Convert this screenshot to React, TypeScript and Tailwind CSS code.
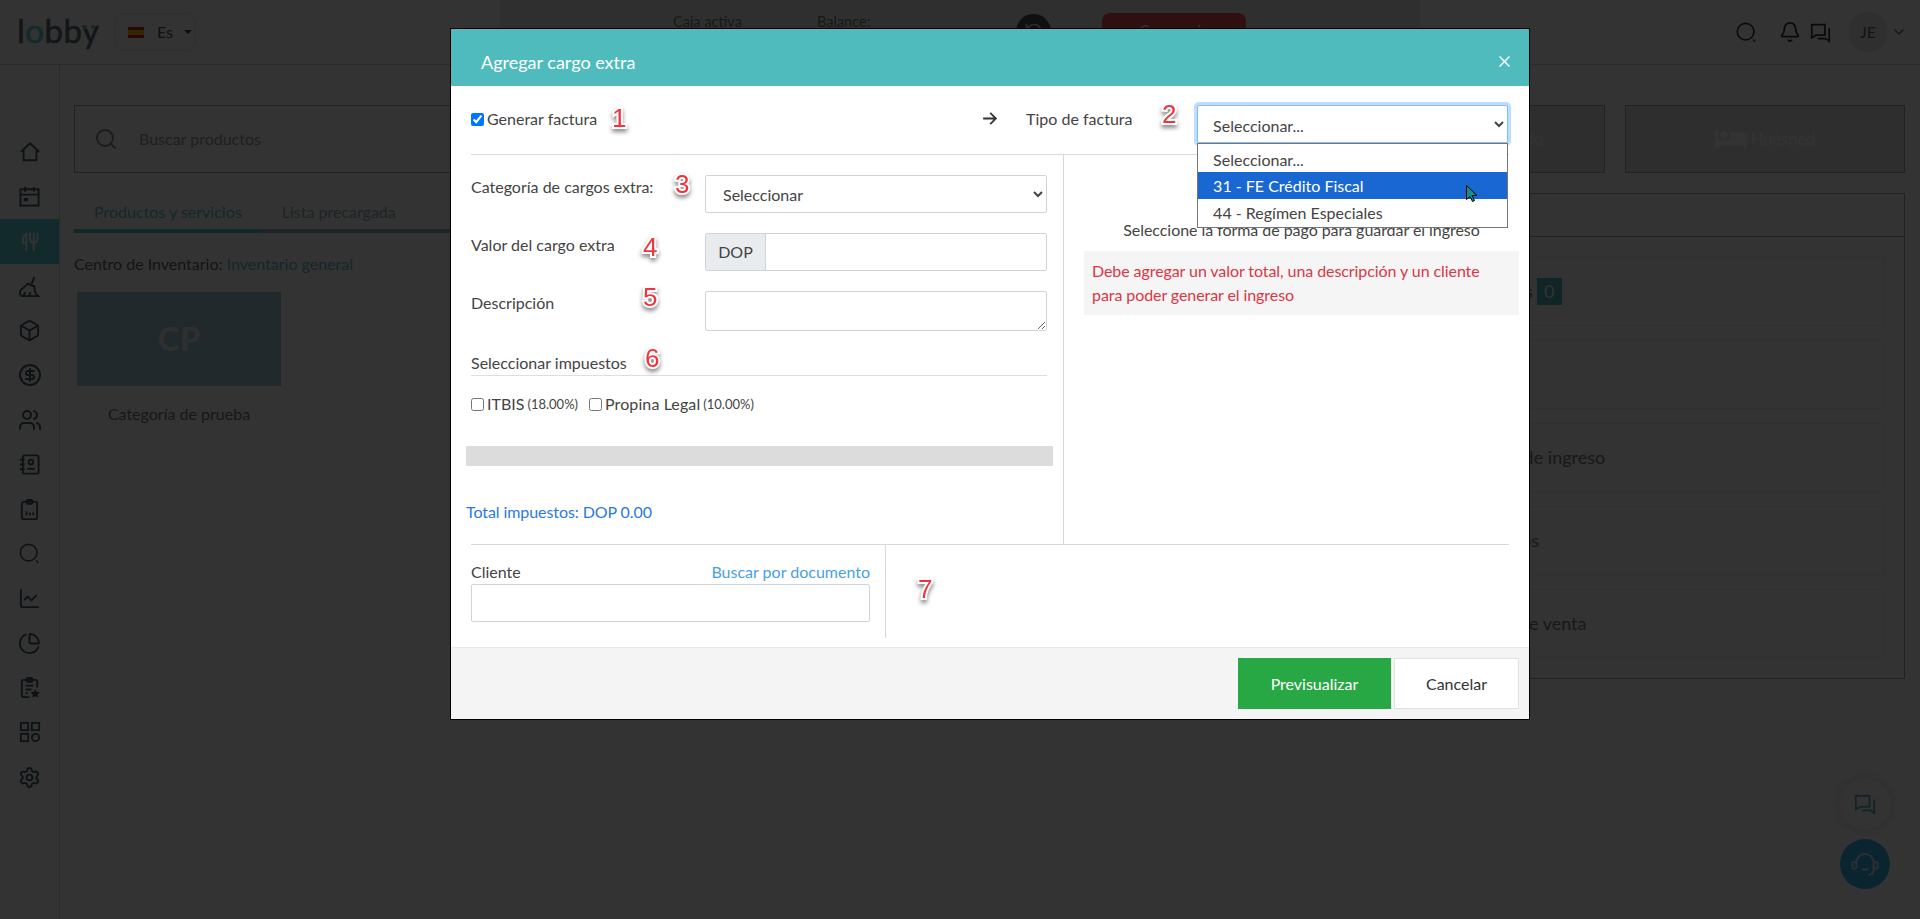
import React from "react";
import {
  Box,
  CircleDollarSign,
  Users,
  ChartLine,
  ChartPie,
  Settings,
  Bell,
  ChevronDown,
  Search,
  RotateCcw,
} from "lucide-react";
import { FaBed } from "react-icons/fa";

const svgProps = {
  viewBox: "0 0 24 24",
  fill: "none",
  stroke: "currentColor",
  strokeWidth: 2,
};

function HomeIcon() {
  return (
    <svg {...svgProps} className="h-[22px] w-[22px]">
      <path d="M2 12 12 2.5 22 12" />
      <path d="M5 10v11h14V10" />
    </svg>
  );
}

function CalendarIcon() {
  return (
    <svg {...svgProps} className="h-[23px] w-[23px]">
      <rect x="2.5" y="4.5" width="19" height="17" />
      <path d="M2.5 10h19M7.5 2v5M16.5 2v5" />
      <rect x="6" y="13.5" width="4.5" height="3.5" fill="currentColor" stroke="none" />
    </svg>
  );
}

function CutleryIcon() {
  return (
    <svg {...svgProps} className="h-[22px] w-[22px]">
      <path d="M8 2v20M8 3C5 4 4 9 4.500 13H8" />
      <path d="M16 2v20M12 2v7c0 3 2 4 4 4s4-1 4-4V2" />
    </svg>
  );
}

function BroomIcon() {
  return (
    <svg {...svgProps} className="h-[23px] w-[23px]">
      <path d="M17 2l-3 8" />
      <path d="M10 9l7 3c0 4 .5 7 4 10H5c-2 0-3-2-3-4 0-4 5-4 8-9z" />
      <path d="M6 22c0-2 1-3 2-4M12 22c0-2 .5-3 1-4" />
    </svg>
  );
}

function ContactBookIcon() {
  return (
    <svg {...svgProps} className="h-[23px] w-[23px]">
      <rect x="5" y="2.500" width="16.500" height="19" rx="2" />
      <path d="M2 7h5M2 12h5M2 17h5" />
      <circle cx="13.500" cy="9.500" r="2.500" />
      <path d="M9.500 16.500h8" />
    </svg>
  );
}

function ClipboardBarsIcon() {
  return (
    <svg {...svgProps} className="h-[23px] w-[23px]">
      <rect x="4" y="4" width="16" height="18" rx="2" />
      <rect x="9" y="2" width="6" height="4" rx="1" />
      <path d="M9 18v-4M12.500 18v-2.500M16 18v-3" />
    </svg>
  );
}

function LoupeIcon({ size }: { size: string }) {
  return (
    <svg {...svgProps} className={size}>
      <circle cx="11" cy="11" r="9.500" />
      <path d="M19.500 20l2.500 2.500" strokeWidth="1.500" />
    </svg>
  );
}

function ClipboardStarIcon() {
  return (
    <svg {...svgProps} className="h-[23px] w-[23px]">
      <path d="M12 22H6a2 2 0 0 1-2-2V6a2 2 0 0 1 2-2h12a2 2 0 0 1 2 2v6" />
      <rect x="9" y="2" width="6" height="4" rx="1" />
      <path d="M8 10h8M8 14h6M8 18h2" />
      <path d="M18 13.500l1.500 3 3.500.5-2.500 2.400.6 3.300-3.100-1.600-3.100 1.600.6-3.300L13 17l3.500-.5z" fill="currentColor" stroke="none" />
    </svg>
  );
}

function AppsIcon() {
  return (
    <svg {...svgProps} className="h-[22px] w-[22px]">
      <rect x="2" y="2" width="8" height="8" />
      <rect x="14" y="2" width="8" height="8" />
      <rect x="2" y="14" width="8" height="8" />
      <circle cx="18" cy="18" r="4" />
    </svg>
  );
}

function ChatIcon({ size }: { size: string }) {
  return (
    <svg {...svgProps} className={size}>
      <path d="M2 3h15v12H7l-5 3z" />
      <path d="M21 8h1v14l-4-3H9" />
    </svg>
  );
}

function HeadsetIcon() {
  return (
    <svg {...svgProps} className="h-[32px] w-[32px]" strokeWidth="1.500">
      <path d="M5.500 11a6.500 6.500 0 0 1 13 0v5" />
      <rect x="2.500" y="10.500" width="3" height="5" rx="1" />
      <rect x="18.500" y="10.500" width="3" height="5" rx="1" />
      <path d="M9.500 15.500c1.500 1 3.500 1 5 0M18.500 16c0 2.500-1.500 4-4 4.500" />
    </svg>
  );
}

function SidebarItem({ active, children }: { active?: boolean; children: React.ReactNode }) {
  return (
    <div
      className={`flex h-[44.64px] items-center justify-center ${
        active ? "bg-[#5bd0d4] text-white" : "text-[#425c68]"
      }`}
    >
      {children}
    </div>
  );
}

function Mark({ className, children }: { className: string; children: React.ReactNode }) {
  return (
    <span
      className={`absolute font-[family-name:Liberation_Sans,sans-serif] text-[26px] leading-none text-[#f2333c] [-webkit-text-stroke:4px_white] [paint-order:stroke_fill] [filter:drop-shadow(0_3px_2px_rgba(0,0,0,0.45))] ${className}`}
    >
      {children}
    </span>
  );
}

function InfoRow({ text, pad, badge }: { text: string; pad: string; badge?: boolean }) {
  return (
    <div className={`flex h-[68.500px] items-center border border-[#efefef] text-[18px] text-[#7a7a7a] ${pad}`}>
      {text}
      {badge && (
        <span className="ml-[4px] flex h-[27px] w-[25px] shrink-0 items-center justify-center bg-[#4ababf] text-[#fff]">
          0
        </span>
      )}
    </div>
  );
}

export default function App() {
  return (
    <div className="relative flex h-screen flex-col overflow-hidden bg-white font-[family-name:Lato,sans-serif]">
      {/* Top bar */}
      <header className="flex h-[65px] shrink-0 items-stretch border-b border-[#d2d2d2]">
        <div className="flex w-[500px] items-start pl-[17px] pt-[8px]">
          <span className="relative w-[98px] text-[33px] leading-[44px] tracking-[0.5px] text-[#5d6e78] [-webkit-text-stroke:0.6px_#5d6e78]">
            l<span className="text-[#5bd0d4] [-webkit-text-stroke:0.6px_#5bd0d4]">o</span>bby
            <span className="absolute left-[66px] top-[17px] h-[4px] w-[4px] rounded-full bg-[#5bd0d4]" />
            <span className="absolute left-[74px] top-[17px] h-[4px] w-[4px] rounded-full bg-[#5bd0d4]" />
          </span>
          <div className="mt-[5px] flex h-[38px] w-[81px] items-center rounded-[10px] border border-[#e4e4e4] pl-[12px] text-[16px] text-[#555]">
            <span className="flex h-[11px] w-[16px] flex-col">
              <span className="h-[3px] bg-[#d8232a]" />
              <span className="h-[5px] bg-[#f5c400]" />
              <span className="h-[3px] bg-[#d8232a]" />
            </span>
            <span className="ml-[13px]">Es</span>
            <span className="ml-[11px] h-0 w-0 border-x-[4px] border-t-[4px] border-x-transparent border-t-[#444]" />
          </div>
        </div>
        <div className="flex flex-1 items-start bg-[#ececec] pl-[173px] pt-[12px] text-[14.500px] leading-[20px] text-[#777]">
          <span className="w-[144px]">Caja activa</span>
          <span className="w-[199px]">Balance:</span>
          <span className="mt-[2px] flex h-[35px] w-[35px] items-center justify-center rounded-full bg-[#505050] text-[#ddd]">
            <RotateCcw className="h-[20px] w-[20px]" />
          </span>
          <span className="ml-[51px] mt-[1px] flex h-[36px] w-[144px] items-center justify-center rounded-lg bg-[#ec4b4b] text-white">
            Cerrar caja
          </span>
        </div>
        <div className="flex w-[500px] items-center pl-[316px] text-[#333]">
          <LoupeIcon size="h-[21px] w-[21px]" />
          <Bell className="ml-[22px] h-[22px] w-[22px]" strokeWidth={2} />
          <span className="ml-[9px]">
            <ChatIcon size="h-[21px] w-[21px]" />
          </span>
          <span className="ml-[17px] flex h-[40px] w-[40px] items-center justify-center rounded-full bg-[#ececec] text-[16px] text-[#666]">
            JE
          </span>
          <ChevronDown className="ml-[3px] h-[16px] w-[16px] text-[#666]" />
        </div>
      </header>

      <div className="flex flex-1">
        {/* Sidebar */}
        <aside className="w-[60px] shrink-0 border-r border-[#d2d2d2] pt-[65px]">
          <SidebarItem><HomeIcon /></SidebarItem>
          <SidebarItem><CalendarIcon /></SidebarItem>
          <SidebarItem active><CutleryIcon /></SidebarItem>
          <SidebarItem><BroomIcon /></SidebarItem>
          <SidebarItem><Box className="h-[23px] w-[23px]" /></SidebarItem>
          <SidebarItem><CircleDollarSign className="h-[24px] w-[24px]" /></SidebarItem>
          <SidebarItem><Users className="h-[24px] w-[24px]" /></SidebarItem>
          <SidebarItem><ContactBookIcon /></SidebarItem>
          <SidebarItem><ClipboardBarsIcon /></SidebarItem>
          <SidebarItem><LoupeIcon size="h-[21px] w-[21px]" /></SidebarItem>
          <SidebarItem><ChartLine className="h-[23px] w-[23px]" /></SidebarItem>
          <SidebarItem><ChartPie className="h-[23px] w-[23px]" /></SidebarItem>
          <SidebarItem><ClipboardStarIcon /></SidebarItem>
          <SidebarItem><AppsIcon /></SidebarItem>
          <SidebarItem><Settings className="h-[23px] w-[23px]" /></SidebarItem>
        </aside>

        {/* Main content */}
        <main className="grid flex-1 grid-cols-[1fr_580px] content-start gap-x-[20px] gap-y-[20px] pl-[14px] pr-[15px] pt-[40px]">
          <div className="flex h-[68px] items-center border border-[#aaa] pl-[19px] text-[16px] text-[#999]">
            <Search className="h-[24px] w-[24px] text-[#888]" />
            <span className="ml-[21px]">Buscar productos</span>
          </div>
          <div className="flex gap-[20px]">
            <div className="flex h-[68px] w-[280px] items-center justify-center border border-[#aaa] bg-[#e6e6e6] pl-[80px] text-[16.500px] text-[#fdfdfd]">
              Registrado
            </div>
            <div className="flex h-[68px] w-[280px] items-center justify-center gap-[4px] border border-[#aaa] bg-[#e6e6e6] text-[16.500px] text-[#fdfdfd]">
              <FaBed className="h-[32px] w-[32px]" />
              Huésped
            </div>
          </div>

          <div>
            <div className="flex border-b-[4px] border-[#8ab4b8] text-[16px] leading-[24px]">
              <div className="-mb-[4px] border-b-[4px] border-[#5bc0c6] px-[20px] pb-[5px] pt-[7px] text-[#66c0d0]">
                Productos y servicios
              </div>
              <div className="px-[20px] pb-[5px] pt-[7px] text-[#8ab8c0]">Lista precargada</div>
            </div>
            <p className="mt-[19px] text-[16px] leading-[24px] text-[#666]">
              Centro de Inventario: <span className="text-[#66c0d0]">Inventario general</span>
            </p>
            <div className="ml-[3px] mt-[16px] w-[204px]">
              <div className="flex h-[94px] items-center justify-center bg-[#a5cddc] text-[33px] font-bold text-[#ececec]">
                CP
              </div>
              <div className="flex h-[56px] items-center justify-center bg-white text-[16px] text-[#777]">
                Categoría de prueba
              </div>
            </div>
          </div>

          <div className="h-[486px] border border-[#aaa]">
            <div className="h-[43px] border-b border-[#aaa]" />
            <div className="flex flex-col gap-[14.500px] pl-[20px] pr-[20px] pt-[20px]">
              <InfoRow text="Categorías" pad="pl-[102px]" badge />
              <InfoRow text="" pad="" />
              <InfoRow text="Categoría de ingreso" pad="pl-[96px]" />
              <InfoRow text="Productos" pad="pl-[112px]" />
              <InfoRow text="Punto de venta" pad="pl-[120px]" />
            </div>
          </div>
        </main>
      </div>

      {/* Floating buttons */}
      <div className="absolute bottom-[30px] right-[29px] flex flex-col items-center gap-[9px]">
        <span className="flex h-[52px] w-[52px] items-center justify-center rounded-full bg-white text-[#5bb8bd] shadow-[0_0_12px_rgba(0,0,0,0.15)]">
          <ChatIcon size="h-[22px] w-[22px]" />
        </span>
        <span className="flex h-[50px] w-[50px] items-center justify-center rounded-full bg-[#32b9ef] text-[#d0ecf4]">
          <HeadsetIcon />
        </span>
      </div>

      {/* Backdrop + modal */}
      <div className="absolute inset-0 flex justify-center bg-black/80 pl-[60px] pt-[28px] text-[16px] leading-[24px] text-[#444]">
        <div className="relative h-[692px] w-[1080px] border border-black bg-white">
          <div className="flex h-[57px] items-start justify-between bg-[#4fbbbd] pl-[30px] pr-[19px] pt-[21px] text-white">
            <h2 className="text-[18px] leading-[24px]">Agregar cargo extra</h2>
            <svg viewBox="0 0 11 11" className="mt-[6px] h-[11px] w-[11px]" stroke="currentColor" strokeWidth="1.500">
              <path d="M.5.5l10 10M10.500.5l-10 10" />
            </svg>
          </div>

          <div className="px-[20px]">
            {/* Invoice row */}
            <div className="flex h-[69px] items-start whitespace-nowrap border-b border-[#d8d8d8] pt-[21px]">
              <label className="flex shrink-0 items-center">
                <input type="checkbox" defaultChecked className="m-0 h-[13px] w-[13px]" />
                <span className="ml-[3px]">Generar factura</span>
              </label>
              <svg viewBox="0 0 24 24" fill="none" stroke="#333" strokeWidth="2.500" className="ml-[384px] mt-[3px] h-[17px] w-[17px] shrink-0">
                <path d="M3 12h18M13 4l8 8-8 8" />
              </svg>
              <span className="ml-[28px] w-[171px] shrink-0">Tipo de factura</span>
              <div className="relative -mt-[2px] shrink-0">
                <select className="h-[38px] w-[311px] rounded-[2px] border border-[#80bdff] bg-white pl-[11px] pt-[2px] text-[16px] shadow-[0_0_0_3px_#bfdeff]">
                  <option>Seleccionar...</option>
                </select>
                <ul className="absolute left-0 top-[38px] z-10 w-[311px] border border-[#767676] bg-white py-[1px]">
                  <li className="flex h-[27px] items-center pl-[15px] pt-[2px]">Seleccionar...</li>
                  <li className="relative flex h-[27px] items-center bg-[#1967d2] pl-[15px] text-white">
                    31 - FE Crédito Fiscal
                    <svg viewBox="0 0 12 17" className="absolute left-[268px] top-[13px] h-[17px] w-[12px]">
                      <path d="M.5.5v14l3.500-3 2.500 5 2-1-2.500-5h5z" fill="#12908f" stroke="#000" />
                    </svg>
                  </li>
                  <li className="flex h-[27px] items-center pl-[15px]">44 - Regímen Especiales</li>
                </ul>
              </div>
            </div>

            {/* Form + payment columns */}
            <div className="flex">
              <div className="h-[389px] w-[593px] border-r border-[#d8d8d8] pr-[16px] pt-[20px]">
                <div className="flex items-start">
                  <span className="w-[234px]">Categoría de cargos extra:</span>
                  <select className="h-[38px] flex-1 rounded-[2px] border border-[#ced4da] bg-white pl-[13px]">
                    <option>Seleccionar</option>
                  </select>
                </div>
                <div className="mt-[20px] flex items-start">
                  <span className="w-[234px]">Valor del cargo extra</span>
                  <div className="flex h-[38px] flex-1 rounded-[2px] border border-[#ced4da]">
                    <span className="flex w-[60px] items-center justify-center border-r border-[#ced4da] bg-[#e9ecef]">DOP</span>
                  </div>
                </div>
                <div className="mt-[20px] flex items-start">
                  <span className="w-[234px]">Descripción</span>
                  <textarea className="h-[40px] flex-1 rounded-[2px] border border-[#ced4da]" />
                </div>
                <div className="mt-[20px] border-b border-[#dedede]">Seleccionar impuestos</div>
                <div className="mt-[16px] flex items-center">
                  <input type="checkbox" className="m-0 h-[13px] w-[13px]" />
                  <span className="ml-[3px]">ITBIS</span>
                  <span className="ml-[3px] text-[13px]">(18.00%)</span>
                  <input type="checkbox" className="m-0 ml-[11px] h-[13px] w-[13px]" />
                  <span className="ml-[3px] tracking-[0.1px]">Propina Legal</span>
                  <span className="ml-[3px] text-[13px]">(10.00%)</span>
                </div>
                <div className="-ml-[5px] -mr-[6px] mt-[30px] h-[20px] bg-[#dcdcdc]" />
                <p className="-ml-[5px] mt-[34px] tracking-[-0.08px] text-[#2a7ae2]">Total impuestos: DOP 0.00</p>
              </div>
              <div className="-mr-[10px] flex-1 pl-[20px] pt-[63px]">
                <p className="text-center tracking-[-0.05px]">Seleccione la forma de pago para guardar el ingreso</p>
                <div className="mt-[9px] bg-[#f5f5f5] px-[8px] py-[8px] tracking-[-0.08px] text-[#dc3545]">
                  Debe agregar un valor total, una descripción y un cliente para poder generar el ingreso
                </div>
              </div>
            </div>

            {/* Client row */}
            <div className="flex border-t border-[#d8d8d8]">
              <div className="w-[415px] border-r border-[#d8d8d8] pb-[16px] pr-[15px] pt-[15px]">
                <div className="flex justify-between">
                  <span>Cliente</span>
                  <span className="text-[#4a9fe0]">Buscar por documento</span>
                </div>
                <div className="h-[38px] rounded-[2px] border border-[#ced4da]" />
              </div>
            </div>
          </div>

          {/* Footer */}
          <div className="absolute inset-x-0 bottom-0 flex h-[72px] items-center justify-end gap-[3px] border-t border-[#e8e8e8] bg-[#f4f4f4] pr-[10px]">
            <button className="h-[51px] w-[153px] bg-[#28a745] text-white">Previsualizar</button>
            <button className="h-[51px] w-[125px] border border-[#dee2e6] bg-white text-[#333]">Cancelar</button>
          </div>

          {/* Numbered annotations */}
          <Mark className="left-[161px] top-[76px]">1</Mark>
          <Mark className="left-[711px] top-[72px]">2</Mark>
          <Mark className="left-[224px] top-[142px]">3</Mark>
          <Mark className="left-[192px] top-[205px]">4</Mark>
          <Mark className="left-[192px] top-[255px]">5</Mark>
          <Mark className="left-[194px] top-[316px]">6</Mark>
          <Mark className="left-[467px] top-[547px]">7</Mark>
        </div>
      </div>
    </div>
  );
}
